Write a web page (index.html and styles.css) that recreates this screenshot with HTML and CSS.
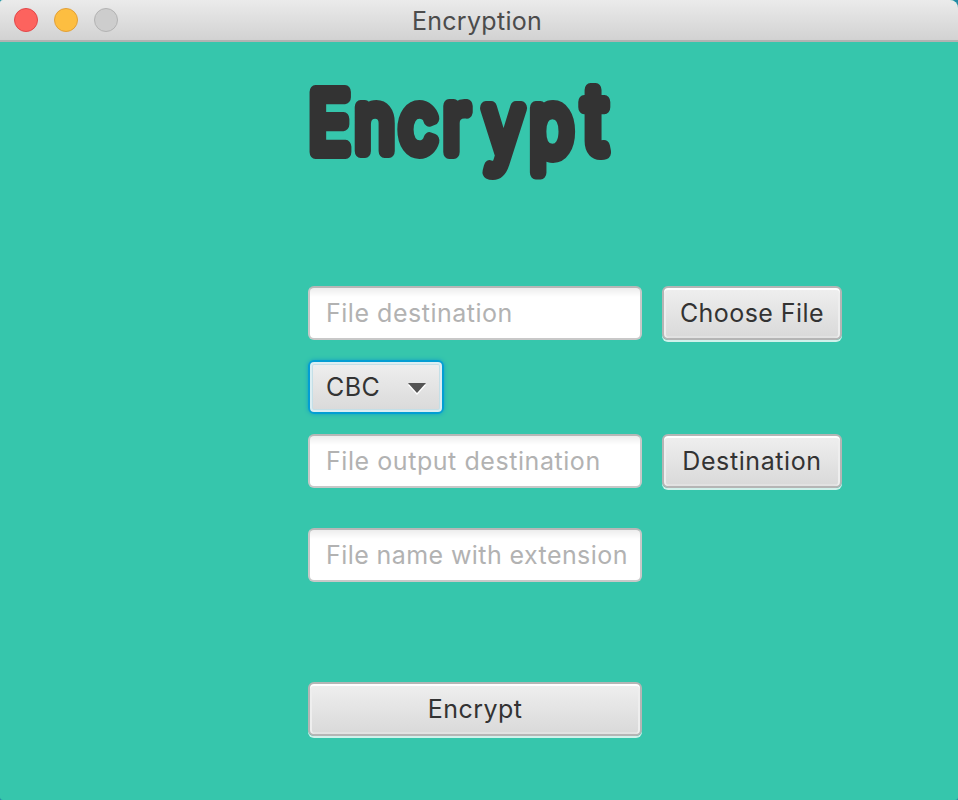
FILE: index.html
```
<!DOCTYPE html>
<html lang="en">
<head>
<meta charset="utf-8">
<title>Encryption</title>
<link rel="stylesheet" href="styles.css">
</head>
<body>
<div class="window">
  <header class="titlebar">
    <div class="lights">
      <span class="light close"></span>
      <span class="light minimize"></span>
      <span class="light zoom"></span>
    </div>
    <span class="caption">Encryption</span>
  </header>
  <main class="content">
    <h1 class="heading">
      <svg class="wordmark" width="334" height="140" viewBox="0 0 334 140">
        <text class="wordtext" transform="scale(.84 1)" y="79.500" x="1 56 109 161 209 264 328"><tspan class="cap">E</tspan>nc<tspan class="arm">r</tspan><tspan class="tail" dy="3">y</tspan><tspan class="tail">p</tspan><tspan class="cross" dy="-2">t</tspan></text>
      </svg>
    </h1>
    <form class="form">
      <div class="row">
        <input class="field" type="text" placeholder="File destination">
        <button class="button choose" type="button">Choose File</button>
      </div>
      <div class="row">
        <button class="combo" type="button">
          <span>CBC</span>
          <svg class="arrow" width="18" height="12" viewBox="0 0 18 12"><path d="M0 2h18L9 12z" fill="#fff"/><path d="M0 0h18L9 10z" fill="#545454"/></svg>
        </button>
      </div>
      <div class="row output">
        <input class="field wide" type="text" placeholder="File output destination">
        <button class="button destination" type="button">Destination</button>
      </div>
      <div class="row name">
        <input class="field extension" type="text" placeholder="File name with extension">
      </div>
      <button class="button submit" type="button">Encrypt</button>
    </form>
  </main>
</div>
</body>
</html>
```
FILE: styles.css
```
* {
  box-sizing: border-box;
}

body {
  margin: 0;
  background: #2389a5;
  font-family: Inter, "Liberation Sans", sans-serif;
  color: #333;
}

.window {
  height: 800px;
  overflow: hidden;
  border-radius: 3px 8px 3px 3px;
  background: #36c6ac;
}

.titlebar {
  display: grid;
  grid-template-columns: 1fr auto 1fr;
  align-items: center;
  height: 42px;
  padding: 0 14px;
  border-bottom: 2px solid #b2b2b2;
  background: linear-gradient(#ebebeb, #d2d2d2);
}

.lights {
  display: flex;
  gap: 16px;
}

.light {
  width: 24px;
  height: 24px;
  border: 1px solid;
  border-radius: 50%;
}

.close {
  border-color: #e2474a;
  background: #fd635e;
}

.minimize {
  border-color: #e2a038;
  background: #fdbe41;
}

.zoom {
  border-color: #b3b3b3;
  background: #cdcdcd;
}

.caption {
  padding-top: 1px;
  font-size: 25px;
  line-height: 30px;
  letter-spacing: 0.3px;
  margin-left: -4px;
  color: #4c4c4c;
}

.content {
  padding: 30px 0 0 308px;
}

.heading {
  height: 214px;
  margin: 0;
}

.wordmark {
  display: block;
  overflow: visible;
}

.wordtext {
  font-family: Inter, sans-serif;
  font-size: 80px;
  font-weight: 300;
  fill: #333;
  stroke: #333;
  stroke-width: 14px;
  stroke-linejoin: round;
}

.cap {
  font-size: 83px;
}

.arm {
  font-size: 84px;
}

.tail {
  font-size: 86px;
}

.cross {
  font-size: 93px;
}

.row {
  display: flex;
  align-items: flex-start;
  gap: 20px;
  height: 54px;
  margin-bottom: 20px;
}

.output {
  margin-bottom: 40px;
}

.name {
  margin-bottom: 100px;
}

.field {
  width: 334px;
  height: 54px;
  padding: 0 10px 0 16px;
  border: 2px solid #c8c8c8;
  border-top-color: #b7b7b7;
  border-radius: 6px;
  outline: none;
  background: linear-gradient(#ededed, #fff 9px);
  font: 25px Inter, sans-serif;
  letter-spacing: 0.52px;
}

.wide {
  letter-spacing: 0.56px;
}

.extension {
  letter-spacing: 0.42px;
}

.field::placeholder {
  color: #b2b2b2;
  opacity: 1;
}

.button,
.combo {
  height: 54px;
  padding: 0;
  border: 2px solid #b5b5b5;
  border-radius: 6px;
  background: linear-gradient(#efefef, #d9d9d9);
  font: 25px Inter, sans-serif;
  letter-spacing: 0.45px;
  color: #333;
}

.button {
  width: 180px;
  box-shadow: inset 0 2px #fff, inset 2px 0 #eee, inset -2px 0 #eee, inset 0 -2px #e2e2e2, 0 2px #d0f1eb;
}

.combo {
  display: flex;
  align-items: center;
  justify-content: space-between;
  width: 136px;
  padding: 0 16px;
  border-color: #039ed3;
  box-shadow: inset 0 0 0 2px #dceef3, inset 0 0 0 3px #c4dfe7, 0 0 4px #159fc4;
}

.arrow {
  margin-top: 4px;
}

.destination {
  letter-spacing: 0.6px;
}

.submit {
  display: block;
  width: 334px;
}
```
